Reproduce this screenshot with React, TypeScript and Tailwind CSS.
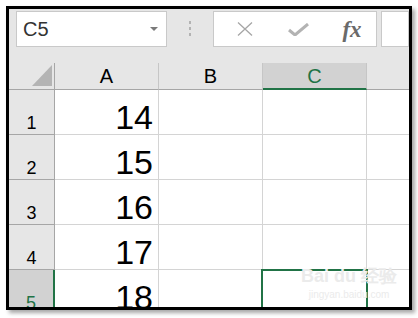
import { Fragment } from "react";

const rows = [
  { n: "1", v: "14" },
  { n: "2", v: "15" },
  { n: "3", v: "16" },
  { n: "4", v: "17" },
  { n: "5", v: "18" },
];

export default function App() {
  return (
    <div className="w-[418px] h-[318px] bg-white overflow-hidden pt-[6px] pl-[6px] font-['Liberation_Sans',Arial,sans-serif]">
      <div className="relative w-[406px] h-[304px] border-[3px] border-black bg-[#e6e6e6] overflow-hidden shadow-[3px_3px_4px_rgba(0,0,0,0.35)]">
        {/* Formula bar */}
        <div className="flex h-[54px] items-start pt-[2px] pl-[7px]">
          <div className="flex h-[36px] w-[151px] items-center justify-between border border-[#c9c9c9] bg-white pl-[6px] pr-[8px]">
            <span className="text-[20px] leading-none text-[#333]">C5</span>
            <svg width="8" height="4" viewBox="0 0 8 4">
              <polygon points="0,0 8,0 4,4" fill="#7a7a7a" />
            </svg>
          </div>
          <div className="flex w-[46px] flex-col items-center gap-[3px] pt-[10px]">
            <span className="h-[3px] w-[2px] bg-[#b3b3b3]" />
            <span className="h-[3px] w-[2px] bg-[#b3b3b3]" />
            <span className="h-[3px] w-[2px] bg-[#b3b3b3]" />
          </div>
          <div className="flex h-[36px] w-[164px] items-center border border-[#c9c9c9] bg-white">
            <div className="flex w-[54px] justify-center pl-[8px]">
              <svg width="18" height="14" viewBox="0 0 18 14">
                <path d="M2 0.5 L16 13.5 M16 0.5 L2 13.5" stroke="#a6a6a6" strokeWidth="1.3" fill="none" />
              </svg>
            </div>
            <div className="flex w-[54px] justify-center pl-[6px]">
              <svg width="21" height="13" viewBox="0 0 21 13">
                <path d="M1 7 L7 12 L20 1" stroke="#b3b3b3" strokeWidth="3" fill="none" strokeLinejoin="round" />
              </svg>
            </div>
            <div className="flex w-[54px] justify-center pl-[6px]">
              <span className="font-['Liberation_Serif',serif] text-[23px] font-bold italic leading-none text-[#6a6a6a]">fx</span>
            </div>
          </div>
          <div className="ml-[4px] h-[36px] flex-1 border border-[#c9c9c9] bg-white" />
        </div>

        {/* Sheet grid */}
        <div className="grid grid-cols-[46px_104px_104px_104px_1fr]">
          {/* Column header row */}
          <div className="relative h-[27px] border-r border-b border-[#a6a6a6]">
            <svg className="absolute left-[23px] top-[2px]" width="20" height="21" viewBox="0 0 20 21">
              <polygon points="20,0 20,21 0,21" fill="#b4b4b4" />
            </svg>
          </div>
          <div className="flex h-[27px] items-center justify-center border-r border-b border-r-[#c6c6c6] border-b-[#a6a6a6] text-[20px] leading-none text-black">A</div>
          <div className="flex h-[27px] items-center justify-center border-r border-b border-r-[#c6c6c6] border-b-[#a6a6a6] text-[20px] leading-none text-black">B</div>
          <div className="flex h-[27px] items-center justify-center border-r border-b-2 border-r-[#c6c6c6] border-b-[#217346] bg-[#d2d2d2] pt-[1px] text-[20px] leading-none text-[#217346]">C</div>
          <div className="h-[27px] border-b border-[#a6a6a6]" />

          {rows.map((r) => {
            const sel = r.n === "5";
            return (
              <Fragment key={r.n}>
                <div
                  className={`flex h-[45px] items-end justify-center pb-[2px] text-[18px] leading-none ${
                    sel
                      ? "border-r-2 border-b border-r-[#217346] border-b-[#a6a6a6] bg-[#d2d2d2] text-[#217346]"
                      : "border-r border-b border-r-[#a6a6a6] border-b-[#a6a6a6] text-black"
                  }`}
                >
                  {r.n}
                </div>
                <div className="flex h-[45px] items-end justify-end border-r border-b border-[#d4d4d4] bg-white pr-[5px] text-[34px] leading-none text-black">
                  {r.v}
                </div>
                <div className="h-[45px] border-r border-b border-[#d4d4d4] bg-white" />
                <div className="relative h-[45px] border-r border-b border-[#d4d4d4] bg-white">
                  {sel && <div className="absolute -left-[2px] -right-[2px] -top-[1px] bottom-0 border-2 border-[#217346]" />}
                </div>
                <div className="h-[45px] border-b border-[#d4d4d4] bg-white" />
              </Fragment>
            );
          })}
        </div>

        {/* Watermark */}
        <div className="pointer-events-none absolute left-[292px] top-[258px] flex flex-col items-center whitespace-nowrap text-[#ebebeb]">
          <span className="text-[18px] font-bold leading-none">Bai du 经验</span>
          <span className="mt-[5px] text-[10px] leading-none">jingyan.baidu.com</span>
        </div>
      </div>
    </div>
  );
}
